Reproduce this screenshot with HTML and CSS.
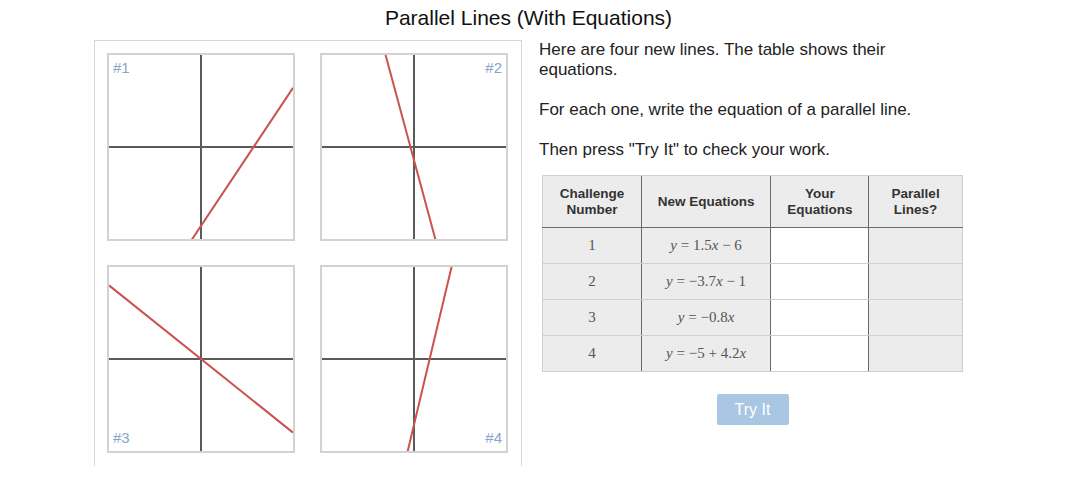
FILE: index.html
```html
<!DOCTYPE html>
<html>
<head>
<meta charset="utf-8">
<link rel="stylesheet" href="styles.css">
</head>
<body>
<div class="page">
  <h1 class="title">Parallel Lines (With Equations)</h1>
  <div class="main">
    <div class="panel">
      <div class="graph">
        <svg viewBox="-7 -7 14 14" width="184" height="184">
          <g transform="scale(1,-1)">
            <line class="axis" x1="-7" y1="0" x2="7" y2="0"/>
            <line class="axis" x1="0" y1="-7" x2="0" y2="7"/>
            <line class="ln" x1="-7" y1="-16.5" x2="7" y2="4.5"/>
          </g>
        </svg>
        <span class="lbl tl">#1</span>
      </div>
      <div class="graph">
        <svg viewBox="-7 -7 14 14" width="184" height="184">
          <g transform="scale(1,-1)">
            <line class="axis" x1="-7" y1="0" x2="7" y2="0"/>
            <line class="axis" x1="0" y1="-7" x2="0" y2="7"/>
            <line class="ln" x1="-7" y1="24.9" x2="7" y2="-26.9"/>
          </g>
        </svg>
        <span class="lbl tr">#2</span>
      </div>
      <div class="graph">
        <svg viewBox="-7 -7 14 14" width="184" height="184">
          <g transform="scale(1,-1)">
            <line class="axis" x1="-7" y1="0" x2="7" y2="0"/>
            <line class="axis" x1="0" y1="-7" x2="0" y2="7"/>
            <line class="ln" x1="-7" y1="5.6" x2="7" y2="-5.6"/>
          </g>
        </svg>
        <span class="lbl bl">#3</span>
      </div>
      <div class="graph">
        <svg viewBox="-7 -7 14 14" width="184" height="184">
          <g transform="scale(1,-1)">
            <line class="axis" x1="-7" y1="0" x2="7" y2="0"/>
            <line class="axis" x1="0" y1="-7" x2="0" y2="7"/>
            <line class="ln" x1="-7" y1="-34.4" x2="7" y2="24.4"/>
          </g>
        </svg>
        <span class="lbl br">#4</span>
      </div>
    </div>
    <div class="side">
      <p>Here are four new lines. The table shows their equations.</p>
      <p>For each one, write the equation of a parallel line.</p>
      <p>Then press "Try It" to check your work.</p>
      <table class="tbl">
        <thead>
          <tr>
            <th class="c1">Challenge<br>Number</th>
            <th class="c2">New Equations</th>
            <th class="c3">Your<br>Equations</th>
            <th class="c4">Parallel<br>Lines?</th>
          </tr>
        </thead>
        <tbody>
          <tr><td class="num">1</td><td class="eq"><i>y</i> = 1.5<i>x</i> − 6</td><td class="in"></td><td></td></tr>
          <tr><td class="num">2</td><td class="eq"><i>y</i> = −3.7<i>x</i> − 1</td><td class="in"></td><td></td></tr>
          <tr><td class="num">3</td><td class="eq"><i>y</i> = −0.8<i>x</i></td><td class="in"></td><td></td></tr>
          <tr><td class="num">4</td><td class="eq"><i>y</i> = −5 + 4.2<i>x</i></td><td class="in"></td><td></td></tr>
        </tbody>
      </table>
      <div class="btnrow"><button class="try">Try It</button></div>
    </div>
  </div>
</div>
</body>
</html>
```
FILE: styles.css
```css
html, body {
  margin: 0;
  padding: 0;
  background: #fff;
}
body {
  font-family: "Liberation Sans", Arial, sans-serif;
  color: #222;
}
.page {
  width: 869px;
  margin-left: 94px;
}
.title {
  margin: 0;
  height: 39px;
  font-size: 21px;
  font-weight: normal;
  line-height: 36px;
  text-align: center;
  color: #111;
}
.main {
  display: flex;
  align-items: flex-start;
}
.panel {
  box-sizing: border-box;
  width: 428px;
  height: 426px;
  margin-top: 1px;
  border: 1px solid #d6d6d6;
  border-bottom: none;
  padding: 12px 13px 0 12px;
  display: grid;
  grid-template-columns: 188px 188px;
  grid-auto-rows: 188px;
  gap: 24px 25px;
}
.graph {
  position: relative;
  border: 2px solid #d2d2d2;
  width: 184px;
  height: 184px;
}
.graph svg {
  display: block;
  overflow: hidden;
}
.axis {
  stroke: #5a5a5a;
  stroke-width: 2;
  vector-effect: non-scaling-stroke;
}
.ln {
  stroke: #c9534f;
  stroke-width: 2;
  vector-effect: non-scaling-stroke;
}
.lbl {
  position: absolute;
  font-size: 15px;
  color: #89a5c8;
  line-height: 16px;
}
.tl { left: 4px; top: 5px; }
.tr { right: 4px; top: 5px; }
.bl { left: 4px; bottom: 5px; }
.br { right: 4px; bottom: 5px; }

.side {
  margin-left: 17px;
  width: 424px;
}
.side p {
  margin: 0 0 20px 0;
  width: 410px;
  font-size: 17px;
  line-height: 20px;
  color: #222;
  position: relative;
  top: 1px;
}
.side p:last-of-type {
  margin-bottom: 16px;
}
.tbl {
  margin-left: 3px;
  border-collapse: collapse;
  width: 421px;
  font-size: 13.5px;
}
.tbl th {
  background: #ececec;
  height: 51px;
  padding: 0;
  font-weight: bold;
  color: #333;
  line-height: 16px;
  border-top: 1px solid #cfcfcf;
  border-bottom: 1px solid #6a6a6a;
  text-align: center;
}
.tbl td {
  background: #ececec;
  height: 35px;
  padding: 0;
  text-align: center;
  border-bottom: 1px solid #cfcfcf;
}
.tbl th + th, .tbl td + td {
  border-left: 1px solid #6a6a6a;
}
.tbl th:first-child, .tbl td:first-child {
  border-left: 1px solid #cfcfcf;
}
.tbl th:last-child, .tbl td:last-child {
  border-right: 1px solid #cfcfcf;
}
.c1 { width: 98px; }
.c2 { width: 129px; }
.c3 { width: 97px; }
.c4 { width: 93px; }
.tbl td.in {
  background: #fff;
}
.num, .eq {
  font-family: "Liberation Serif", "Times New Roman", serif;
  font-size: 15px;
  color: #555;
}
.eq i {
  font-style: italic;
}
.btnrow {
  display: flex;
  justify-content: center;
  margin-top: 22px;
  padding-left: 3px;
}
.try {
  width: 72px;
  height: 31px;
  border: none;
  border-radius: 2px;
  background: #a9c6e2;
  color: #fff;
  font-family: "Liberation Sans", Arial, sans-serif;
  font-size: 16px;
  padding: 0;
}
```
